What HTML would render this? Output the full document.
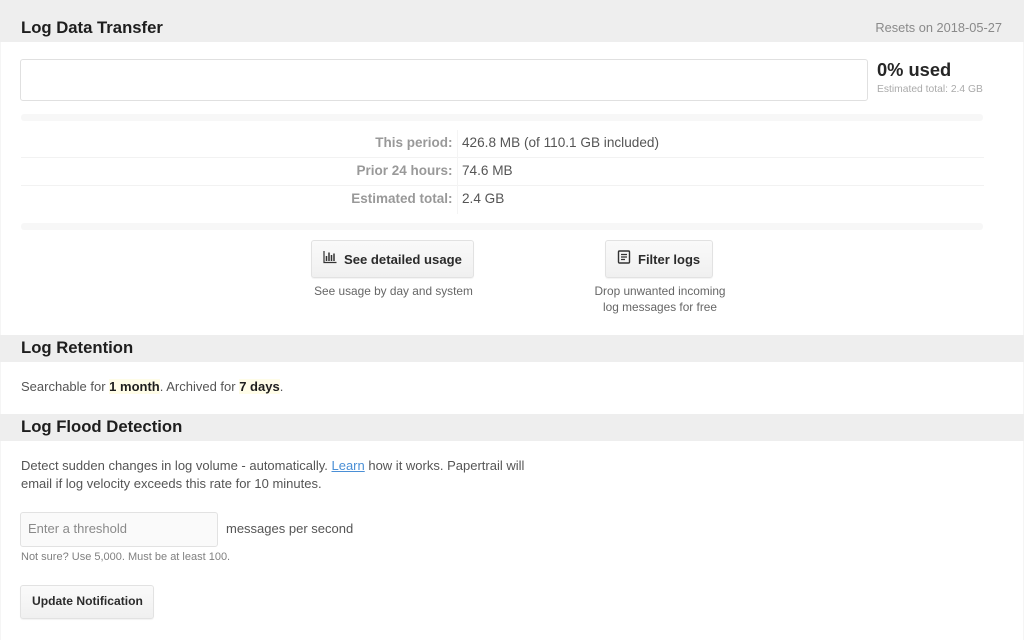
<!DOCTYPE html>
<html>
<head>
<meta charset="utf-8">
<style>
html,body{margin:0;padding:0;width:1024px;height:640px;overflow:hidden;background:#f5f5f5;}
body{position:relative;font-family:"Liberation Sans",sans-serif;color:#555;font-size:13px;}
.a{position:absolute;white-space:nowrap;}
.white{position:absolute;left:1px;right:1px;top:0;height:640px;background:#fff;}
.bar{position:absolute;left:0;width:1024px;background:#eee;}
h2{position:absolute;margin:0;left:21px;font-size:16.7px;line-height:20px;font-weight:bold;color:#1e1e1e;white-space:nowrap;}
.strip{position:absolute;left:21px;width:962px;height:7px;background:#f7f7f7;border-radius:3px;}
.line{position:absolute;left:21px;width:963px;height:1px;background:#f2f2f2;}
.lbl{position:absolute;width:431.500px;left:21px;text-align:right;font-size:13.500px;font-weight:bold;color:#999;line-height:20px;white-space:nowrap;}
.val{position:absolute;left:462px;color:#555;font-size:13.600px;line-height:20px;white-space:nowrap;}
.btn{position:absolute;box-sizing:border-box;border:1px solid #e2e2e2;border-radius:3px;background:linear-gradient(#fafafa,#f0f0f0);font-weight:bold;color:#2b2b2b;white-space:nowrap;box-shadow:0 1px 1px rgba(0,0,0,.05);}
.note{position:absolute;font-size:11.850px;line-height:16px;color:#666;text-align:center;white-space:nowrap;}
mark{background:#fffde8;color:#1e1e1e;font-weight:bold;}
</style>
</head>
<body>
<div class="white"></div>

<div class="bar" style="top:0;height:42px;"></div>
<h2 style="top:18px;">Log Data Transfer</h2>
<div class="a" style="right:22px;top:20px;font-size:12.800px;line-height:16px;color:#8a8a8a;">Resets on 2018-05-27</div>

<div style="position:absolute;left:20px;top:59px;width:848px;height:42px;box-sizing:border-box;border:1px solid #e0e0e0;border-radius:3px;background:#fff;"></div>
<div class="a" style="left:877px;top:58px;font-size:18.300px;line-height:23px;font-weight:bold;color:#262626;">0% used</div>
<div class="a" style="left:877px;top:83px;font-size:10.300px;line-height:14px;color:#aaa;">Estimated total: 2.4 GB</div>

<div class="strip" style="top:114px;"></div>
<div class="line" style="top:157px;"></div>
<div class="line" style="top:185px;"></div>
<div style="position:absolute;left:457px;top:130px;width:1px;height:84px;background:#f4f4f4;"></div>
<div class="lbl" style="top:133px;">This period:</div>
<div class="val" style="top:133px;">426.8 MB (of 110.1 GB included)</div>
<div class="lbl" style="top:161px;">Prior 24 hours:</div>
<div class="val" style="top:161px;">74.6 MB</div>
<div class="lbl" style="top:189px;">Estimated total:</div>
<div class="val" style="top:189px;">2.4 GB</div>
<div class="strip" style="top:223px;"></div>

<div class="btn" style="left:311px;top:240px;width:163px;height:38px;">
  <svg style="position:absolute;left:11px;top:9px;" width="14" height="14" viewBox="0 0 14 14" fill="none" stroke="#333" stroke-width="1.2">
    <path d="M1 1V12.500H13.500"/>
    <path d="M3.500 11V6M6 11V2.500M8.500 11V5M11 11V3.500" stroke-width="1.500"/>
  </svg>
  <span style="position:absolute;left:32px;top:10px;font-size:13.100px;line-height:18px;">See detailed usage</span>
</div>
<div class="note" style="left:293px;width:201px;top:283px;">See usage by day and system</div>

<div class="btn" style="left:605px;top:240px;width:108px;height:38px;">
  <svg style="position:absolute;left:11px;top:9px;" width="14" height="14" viewBox="0 0 14 14" fill="none" stroke="#333" stroke-width="1.4">
    <rect x="1.500" y="1" width="11" height="12" rx="1"/>
    <path d="M4 4.500H10M4 7H10M4 9.500H8" stroke-width="1.200"/>
  </svg>
  <span style="position:absolute;left:32px;top:10px;font-size:13px;line-height:18px;">Filter logs</span>
</div>
<div class="note" style="left:560px;width:200px;top:283px;">Drop unwanted incoming<br>log messages for free</div>

<div class="bar" style="top:335px;height:27px;"></div>
<h2 style="top:338px;">Log Retention</h2>
<div class="a" style="left:21px;top:377px;line-height:20px;">Searchable for <mark>1 month</mark>. Archived for <mark>7 days</mark>.</div>

<div class="bar" style="top:414px;height:27px;"></div>
<h2 style="top:417px;">Log Flood Detection</h2>
<div class="a" style="left:21px;top:457px;line-height:18px;">Detect sudden changes in log volume - automatically. <span style="color:#4a8fd6;text-decoration:underline;">Learn</span> how it works. Papertrail will<br>email if log velocity exceeds this rate for 10 minutes.</div>

<div style="position:absolute;left:20px;top:512px;width:198px;height:35px;box-sizing:border-box;border:1px solid #e2e2e2;border-radius:3px;background:#fafafa;"></div>
<div class="a" style="left:28px;top:520px;line-height:18px;color:#8a8a8a;">Enter a threshold</div>
<div class="a" style="left:226px;top:520px;line-height:18px;">messages per second</div>
<div class="a" style="left:21px;top:550px;font-size:11px;line-height:15px;color:#808080;">Not sure? Use 5,000. Must be at least 100.</div>

<div class="btn" style="left:20px;top:585px;width:134px;height:34px;">
  <span style="position:absolute;left:11px;top:6px;font-size:12.100px;line-height:18px;">Update Notification</span>
</div>
</body>
</html>
